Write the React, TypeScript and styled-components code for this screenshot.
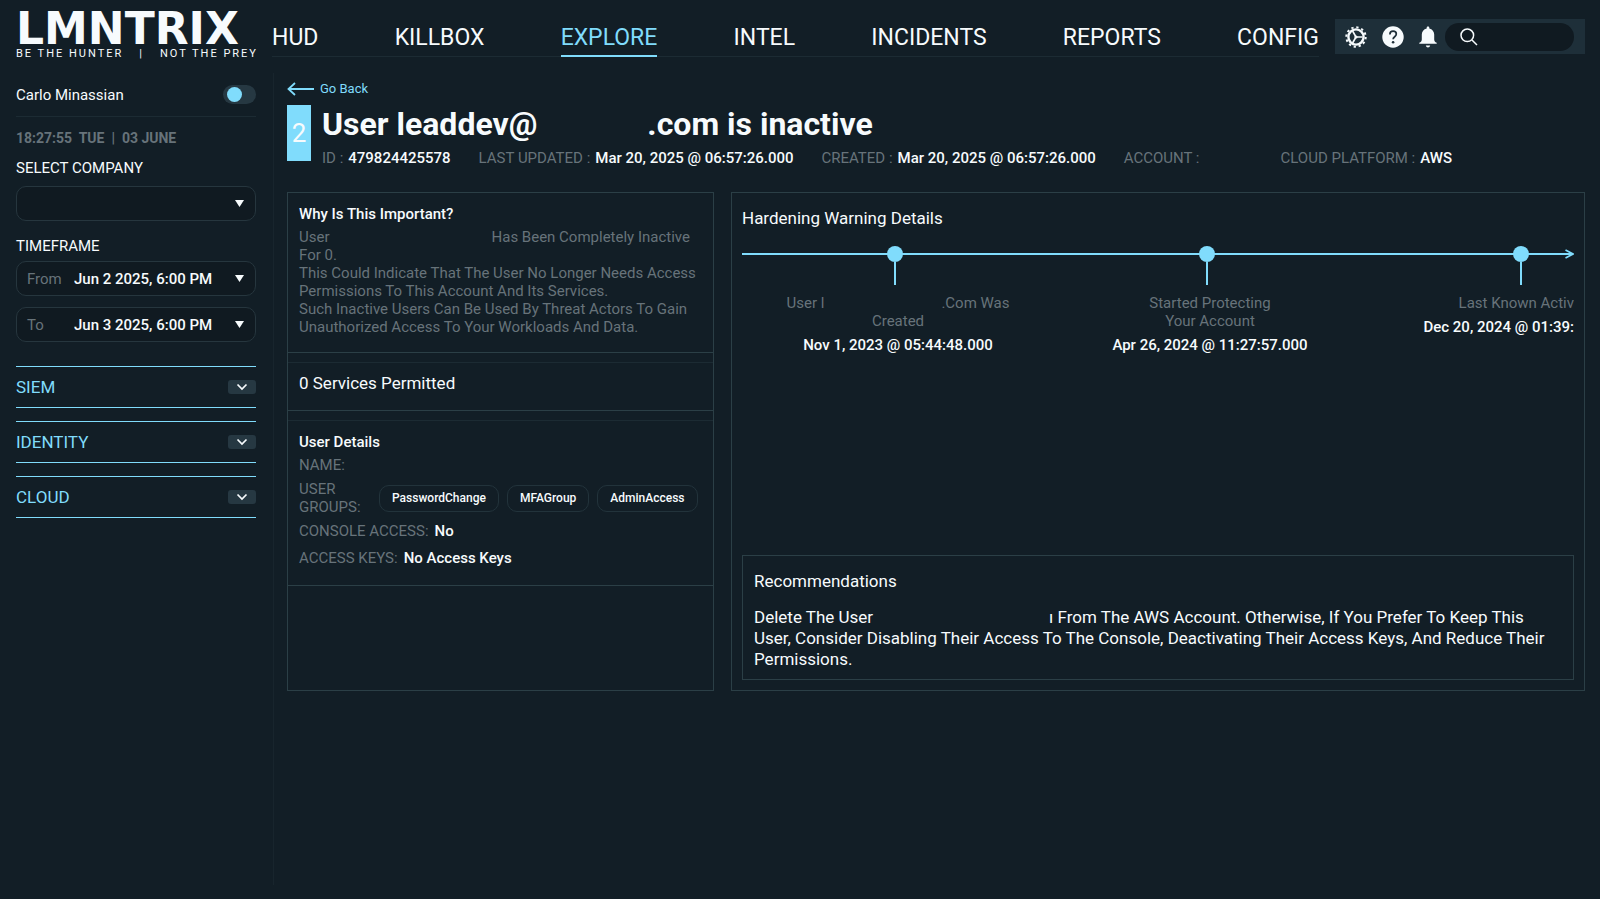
import React, { useState } from "react";
import styled, { createGlobalStyle, css } from "styled-components";

const color = {
  page: "#121e26",
  field: "#101a21",
  bar: "#1e2f39",
  chip: "#263842",
  line: "#2b3f46",
  faint: "#1c2b33",
  cyan: "#80dcfc",
  text: "#f7fbfd",
  muted: "#67737a",
};

const GlobalStyle = createGlobalStyle`
  * { box-sizing: border-box; }
  body {
    margin: 0;
    background: ${color.page};
    color: ${color.text};
    font-family: Roboto, "Liberation Sans", sans-serif;
    font-size: 15px;
    line-height: 18px;
  }
  h1, h2, h3, p, dl, dd, dt, ul, ol { margin: 0; padding: 0; font-weight: 400; }
  ul, ol { list-style: none; }
  button, select, input { font: inherit; color: inherit; border: 0; background: none; padding: 0; margin: 0; }
  button { cursor: pointer; }
  a { color: inherit; text-decoration: none; }
`;

const Page = styled.div`
  min-height: 100vh;
  padding: 0 15px 14px 16px;
  display: flex;
  flex-direction: column;
`;

const Header = styled.header`
  display: flex;
  align-items: flex-start;
  height: 73px;
`;

const Logo = styled.a`
  flex: 0 0 256px;
  padding-top: 10px;
`;

const Wordmark = styled.span`
  display: block;
  font: 700 44px/38px "DejaVu Sans", sans-serif;
`;

const Tagline = styled.span`
  display: flex;
  justify-content: space-between;
  width: 242px;
  font-size: 11px;
  line-height: 11px;
  letter-spacing: 2px;
  white-space: nowrap;
`;

const Nav = styled.nav`
  flex: 1;
  display: flex;
  justify-content: space-between;
  height: 57px;
  border-bottom: 1px solid ${color.faint};
`;

const NavLink = styled.a<{ $active?: boolean }>`
  height: 57px;
  padding-top: 23px;
  font-size: 23px;
  line-height: 30px;
  border-bottom: 2px solid transparent;
  ${(p) => p.$active && css`color: ${color.cyan}; border-color: ${color.cyan};`}
`;

const Toolbar = styled.div`
  display: flex;
  align-items: center;
  gap: 15px;
  flex: 0 0 250px;
  height: 35px;
  margin: 19px 0 0 16px;
  padding: 0 11px 0 10px;
  background: ${color.bar};
`;

const IconButton = styled.button`
  display: flex;
  svg { display: block; }
`;

const SearchBox = styled.label`
  flex: 1;
  min-width: 0;
  display: flex;
  align-items: center;
  gap: 6px;
  height: 28px;
  margin-left: -7px;
  padding: 0 14px;
  border-radius: 14px;
  background: ${color.field};
  svg { flex: none; }
  input { flex: 1; width: 0; min-width: 0; outline: none; }
`;

const Columns = styled.div`
  flex: 1;
  display: flex;
`;

const Sidebar = styled.aside`
  flex: 0 0 258px;
  padding-right: 17px;
  border-right: 1px solid #18252d;
`;

const UserRow = styled.div`
  display: flex;
  justify-content: space-between;
  align-items: center;
  height: 44px;
  border-bottom: 1px solid ${color.faint};
`;

const Switch = styled.input`
  && {
    appearance: none;
    width: 33px;
    height: 19px;
    padding: 2px 4px;
    border-radius: 10px;
    background: ${color.chip};
    cursor: pointer;
  }
  &::before {
    content: "";
    display: block;
    width: 15px;
    height: 15px;
    border-radius: 50%;
    background: ${color.cyan};
  }
  &:checked::before { margin-left: 10px; }
`;

const Clock = styled.p`
  padding: 12px 0;
  color: ${color.muted};
  font-weight: 700;
  font-size: 14px;
  white-space: pre;
`;

const FieldTitle = styled.h2`
  font-size: 15px;
`;

const FieldList = styled.div<{ $last?: boolean }>`
  display: flex;
  flex-direction: column;
  gap: 11px;
  margin: ${(p) => (p.$last ? "6px 0 24px" : "9px 0 16px")};
`;

const Field = styled.label`
  display: flex;
  align-items: center;
  height: 35px;
  padding: 0 11px 0 10px;
  border: 1px solid #26363e;
  border-radius: 10px;
  background: ${color.field};
  select { flex: 1; min-width: 0; appearance: none; outline: none; font-weight: 500; }
`;

const FieldHint = styled.span`
  flex: 0 0 47px;
  color: ${color.muted};
`;

const Groups = styled.div`
  display: flex;
  flex-direction: column;
  gap: 13px;
`;

const GroupButton = styled.button`
  display: flex;
  justify-content: space-between;
  align-items: center;
  height: 42px;
  border: solid ${color.cyan};
  border-width: 1px 0;
  color: ${color.cyan};
  font-size: 17px;
`;

const Chevron = styled.span`
  display: flex;
  align-items: center;
  justify-content: center;
  width: 28px;
  height: 14px;
  border-radius: 3px;
  background: ${color.chip};
`;

const Main = styled.main`
  flex: 1;
  min-width: 0;
  padding: 7px 0 0 13px;
`;

const BackLink = styled.a`
  display: inline-flex;
  align-items: center;
  gap: 6px;
  color: ${color.cyan};
  font-size: 13px;
`;

const Heading = styled.div`
  display: flex;
  gap: 11px;
  margin: 5px 0 25px;
`;

const Severity = styled.span`
  display: flex;
  align-items: center;
  justify-content: center;
  flex: 0 0 24px;
  height: 56px;
  background: ${color.cyan};
  font-size: 26px;
`;

const Title = styled.h1`
  font-size: 32px;
  line-height: 38px;
  font-weight: 700;
  white-space: nowrap;
`;

const Gap = styled.span<{ $width: number }>`
  display: inline-block;
  width: ${(p) => p.$width}px;
`;

const Meta = styled.dl`
  display: flex;
  gap: 28px;
  margin-top: 6px;
  white-space: nowrap;
  div { display: flex; gap: 5px; }
  dt { color: ${color.muted}; }
  dd { font-weight: 500; }
`;

const Panels = styled.div`
  display: grid;
  grid-template-columns: 427fr 854fr;
  gap: 17px;
  min-height: 499px;
`;

const Panel = styled.section<{ $padded?: boolean }>`
  display: flex;
  flex-direction: column;
  min-width: 0;
  border: 1px solid ${color.line};
  ${(p) => p.$padded && css`padding: 14px 10px 10px;`}
`;

const Card = styled.section<{ $compact?: boolean }>`
  padding: ${(p) => (p.$compact ? "9px 11px 16px" : "12px 11px 16px")};
  border-bottom: 1px solid ${color.line};
  & + & {
    margin-top: 9px;
    border-top: 1px solid ${color.faint};
  }
`;

const CardTitle = styled.h2`
  margin-bottom: 5px;
  font-weight: 500;
  font-size: 15px;
`;

const SectionTitle = styled.h2`
  font-size: 17px;
  line-height: 22px;
`;

const MutedText = styled.p`
  color: ${color.muted};
`;

const Details = styled.dl`
  display: flex;
  flex-direction: column;
  gap: 6px;
  > div { display: flex; align-items: center; gap: 6px; }
  > div:last-child { padding: 3px 0 2px; }
  dt { color: ${color.muted}; }
  dd { font-weight: 500; }
`;

const GroupLabel = styled.dt`
  flex: 0 0 74px;
`;

const Tags = styled.dd`
  display: flex;
  gap: 8px;
`;

const Tag = styled.span`
  height: 27px;
  padding: 0 12px;
  border: 1px solid #22333b;
  border-radius: 10px;
  font-size: 12px;
  line-height: 25px;
`;

const Timeline = styled.div`
  display: grid;
  margin-top: 17px;
  > * { grid-area: 1 / 1; }
`;

const Axis = styled.div`
  display: flex;
  align-items: center;
  height: 16px;
  &::before { content: ""; flex: 1; height: 2px; background: ${color.cyan}; }
  svg { margin-left: -7px; }
`;

const Events = styled.ol`
  display: flex;
  overflow: hidden;
`;

const Event = styled.li<{ $cut?: boolean }>`
  flex: 0 0 ${(p) => (p.$cut ? "25%" : "37.5%")};
  display: flex;
  flex-direction: column;
  align-items: ${(p) => (p.$cut ? "flex-end" : "center")};
  text-align: center;
  white-space: nowrap;
`;

const Marker = styled.span<{ $cut?: boolean }>`
  display: flex;
  flex-direction: column;
  align-items: center;
  margin-right: ${(p) => (p.$cut ? 45 : 6)}px;
  margin-bottom: 9px;
  &::before { content: ""; width: 16px; height: 16px; border-radius: 50%; background: ${color.cyan}; }
  &::after { content: ""; width: 2px; height: 23px; background: ${color.cyan}; }
`;

const EventDate = styled.time`
  margin-top: 6px;
  font-weight: 500;
`;

const Recommendations = styled.section`
  margin-top: auto;
  padding: 14px 11px 9px;
  border: 1px solid ${color.line};
  font-size: 17px;
  line-height: 21px;
  p { margin-top: 15px; }
`;

const GearIcon = () => (
  <svg width="22" height="22" viewBox="0 0 22 22" fill="none" stroke="currentColor">
    <circle cx="11" cy="11" r="7.6" strokeWidth="2.4" />
    <circle cx="11" cy="11" r="9.7" strokeWidth="2" strokeDasharray="2.3 2.78" />
    <path d="M11 11h6.500M11 11 7.600 5M11 11l-3.400 6" strokeWidth="1.6" />
    <circle cx="11" cy="11" r="1.600" fill="currentColor" stroke="none" />
  </svg>
);

const HelpIcon = () => (
  <svg width="22" height="22" viewBox="0 0 22 22" fill="none">
    <circle cx="11" cy="11" r="10.7" fill="currentColor" />
    <path d="M7.9 8.4C7.9 6.3 9.3 5.2 11.1 5.2s3.2 1.1 3.2 2.9c0 2.6-3.2 2.7-3.2 5.2" stroke={color.bar} strokeWidth="1.7" />
    <circle cx="11.1" cy="16.3" r="1.3" fill={color.bar} />
  </svg>
);

const BellIcon = () => (
  <svg width="18" height="22" viewBox="0 0 18 22" fill="currentColor">
    <path d="M9 .4c.8 0 1.300.5 1.300 1.300v.7c3 .6 4.900 3 4.900 6.200v5c0 1.600.8 2.600 2.500 3.200v1H.3v-1c1.700-.6 2.500-1.600 2.500-3.200v-5c0-3.200 1.900-5.600 4.900-6.200v-.7C7.700.9 8.200.4 9 .4Z" />
    <path d="M6.800 19.400h4.400c-.3 1.300-1.100 2-2.200 2s-1.900-.7-2.200-2Z" />
  </svg>
);

const SearchIcon = () => (
  <svg width="20" height="20" viewBox="0 0 20 20" fill="none" stroke="currentColor" strokeWidth="1.5">
    <circle cx="8.300" cy="8.300" r="6.300" />
    <path d="m13 13 5 5" />
  </svg>
);

const Caret = () => (
  <svg width="9" height="7" viewBox="0 0 9 7" fill="currentColor" aria-hidden="true">
    <path d="M0 0h9L4.500 7Z" />
  </svg>
);

const ChevronIcon = () => (
  <svg width="12" height="8" viewBox="0 0 12 8" fill="none" stroke={color.text} strokeWidth="1.700">
    <path d="m1.500 1.500 4.500 4.500 4.500-4.500" />
  </svg>
);

const BackArrow = () => (
  <svg width="27" height="14" viewBox="0 0 27 14" fill="none" stroke="currentColor" strokeWidth="1.800">
    <path d="M27 7H1.500M8 1 1.500 7 8 13" />
  </svg>
);

const ArrowHead = () => (
  <svg width="9" height="10" viewBox="0 0 9 10" fill="none" stroke={color.cyan} strokeWidth="1.700">
    <path d="M.5 1 8 5 .5 9" />
  </svg>
);

const navItems = ["HUD", "KILLBOX", "EXPLORE", "INTEL", "INCIDENTS", "REPORTS", "CONFIG"];
const groups = ["SIEM", "IDENTITY", "CLOUD"];
const userGroups = ["PasswordChange", "MFAGroup", "AdminAccess"];
const meta: [string, string][] = [
  ["ID :", "479824425578"],
  ["LAST UPDATED :", "Mar 20, 2025 @ 06:57:26.000"],
  ["CREATED :", "Mar 20, 2025 @ 06:57:26.000"],
];

export default function App() {
  const [on, setOn] = useState(false);
  return (
    <>
      <GlobalStyle />
      <Page>
        <Header>
          <Logo href="#" aria-label="LMNTRIX home">
            <Wordmark>LMNTRIX</Wordmark>
            <Tagline>
              <span>BE THE HUNTER</span>
              <span>|</span>
              <span>NOT THE PREY</span>
            </Tagline>
          </Logo>
          <Nav>
            {navItems.map((item) => (
              <NavLink key={item} href="#" $active={item === "EXPLORE"}>{item}</NavLink>
            ))}
          </Nav>
          <Toolbar>
            <IconButton aria-label="Settings"><GearIcon /></IconButton>
            <IconButton aria-label="Help"><HelpIcon /></IconButton>
            <IconButton aria-label="Notifications"><BellIcon /></IconButton>
            <SearchBox>
              <SearchIcon />
              <input type="text" aria-label="Search" />
            </SearchBox>
          </Toolbar>
        </Header>
        <Columns>
          <Sidebar>
            <UserRow>
              <label htmlFor="user-switch">Carlo Minassian</label>
              <Switch id="user-switch" type="checkbox" checked={on} onChange={() => setOn(!on)} />
            </UserRow>
            <Clock>{"18:27:55  TUE  |  03 JUNE"}</Clock>
            <FieldTitle>SELECT COMPANY</FieldTitle>
            <FieldList>
              <Field>
                <select aria-label="Select company"><option value=""></option></select>
                <Caret />
              </Field>
            </FieldList>
            <FieldTitle>TIMEFRAME</FieldTitle>
            <FieldList $last>
              <Field>
                <FieldHint>From</FieldHint>
                <select><option>Jun 2 2025, 6:00 PM</option></select>
                <Caret />
              </Field>
              <Field>
                <FieldHint>To</FieldHint>
                <select><option>Jun 3 2025, 6:00 PM</option></select>
                <Caret />
              </Field>
            </FieldList>
            <Groups>
              {groups.map((group) => (
                <GroupButton key={group} aria-expanded={false}>
                  {group}
                  <Chevron><ChevronIcon /></Chevron>
                </GroupButton>
              ))}
            </Groups>
          </Sidebar>
          <Main>
            <BackLink href="#"><BackArrow />Go Back</BackLink>
            <Heading>
              <Severity>2</Severity>
              <div>
                <Title>User leaddev@<Gap $width={110} />.com is inactive</Title>
                <Meta>
                  {meta.map(([name, value]) => (
                    <div key={name}><dt>{name}</dt><dd>{value}</dd></div>
                  ))}
                  <div><dt>ACCOUNT :</dt><dd><Gap $width={48} /></dd></div>
                  <div><dt>CLOUD PLATFORM :</dt><dd>AWS</dd></div>
                </Meta>
              </div>
            </Heading>
            <Panels>
              <Panel>
                <Card>
                  <CardTitle>Why Is This Important?</CardTitle>
                  <MutedText>User<Gap $width={162} />Has Been Completely Inactive For 0.</MutedText>
                  <MutedText>This Could Indicate That The User No Longer Needs Access Permissions To This Account And Its Services.</MutedText>
                  <MutedText>Such Inactive Users Can Be Used By Threat Actors To Gain Unauthorized Access To Your Workloads And Data.</MutedText>
                </Card>
                <Card $compact>
                  <SectionTitle>0 Services Permitted</SectionTitle>
                </Card>
                <Card>
                  <CardTitle>User Details</CardTitle>
                  <Details>
                    <div><dt>NAME:</dt><dd /></div>
                    <div>
                      <GroupLabel>USER GROUPS:</GroupLabel>
                      <Tags>{userGroups.map((group) => <Tag key={group}>{group}</Tag>)}</Tags>
                    </div>
                    <div><dt>CONSOLE ACCESS:</dt><dd>No</dd></div>
                    <div><dt>ACCESS KEYS:</dt><dd>No Access Keys</dd></div>
                  </Details>
                </Card>
              </Panel>
              <Panel $padded>
                <SectionTitle>Hardening Warning Details</SectionTitle>
                <Timeline>
                  <Axis><ArrowHead /></Axis>
                  <Events>
                    <Event>
                      <Marker />
                      <MutedText>User l<Gap $width={117} />.Com Was<br />Created</MutedText>
                      <EventDate>Nov 1, 2023 @ 05:44:48.000</EventDate>
                    </Event>
                    <Event>
                      <Marker />
                      <MutedText>Started Protecting<br />Your Account</MutedText>
                      <EventDate>Apr 26, 2024 @ 11:27:57.000</EventDate>
                    </Event>
                    <Event $cut>
                      <Marker $cut />
                      <MutedText>Last Known Activ</MutedText>
                      <EventDate>Dec 20, 2024 @ 01:39:</EventDate>
                    </Event>
                  </Events>
                </Timeline>
                <Recommendations>
                  <SectionTitle>Recommendations</SectionTitle>
                  <p>
                    Delete The User<Gap $width={176} />ı From The AWS Account. Otherwise, If You Prefer To Keep This User,
                    Consider Disabling Their Access To The Console, Deactivating Their Access Keys, And Reduce Their Permissions.
                  </p>
                </Recommendations>
              </Panel>
            </Panels>
          </Main>
        </Columns>
      </Page>
    </>
  );
}
